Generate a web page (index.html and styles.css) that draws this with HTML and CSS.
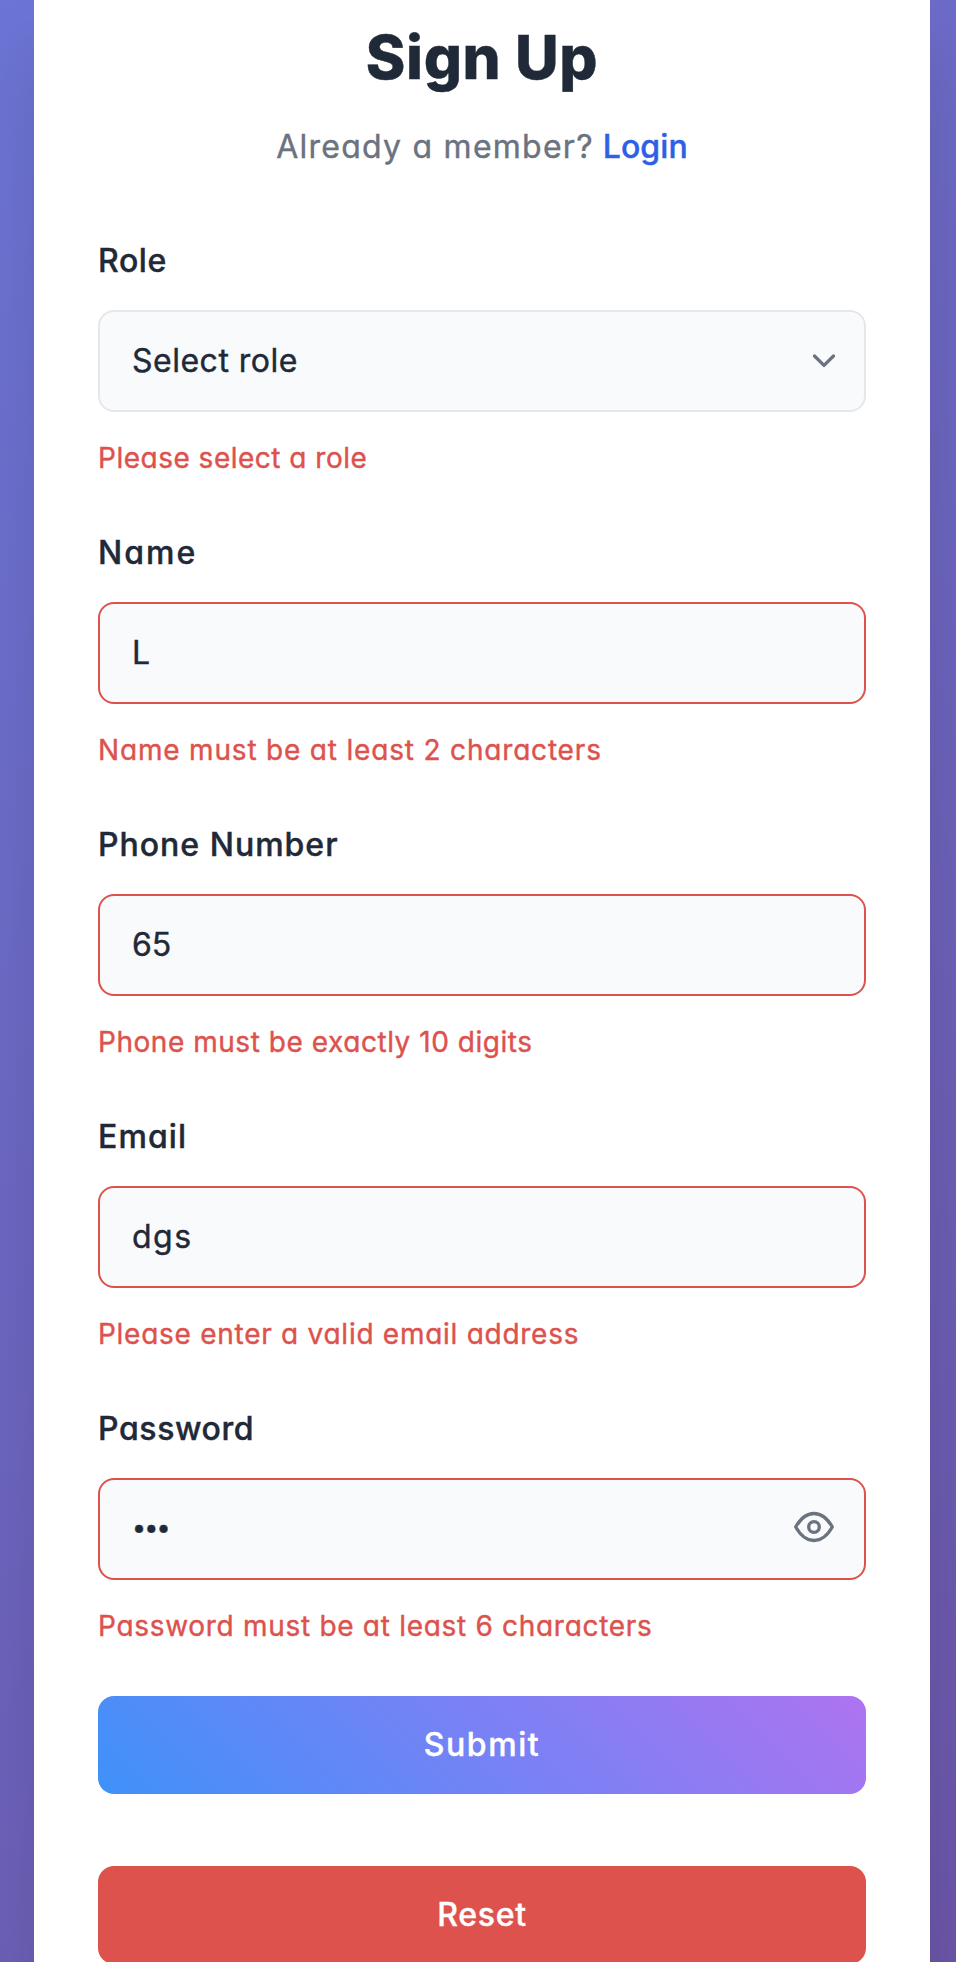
FILE: index.html
```html
<!DOCTYPE html>
<html lang="en">
<head>
<meta charset="utf-8">
<title>Sign Up</title>
<link rel="stylesheet" href="styles.css">
</head>
<body>
<main class="card">
  <h1 class="title">Sign Up</h1>
  <p class="subtitle"><span class="prompt">Already a member?</span> <a class="login" href="#">Login</a></p>
  <form class="form">
    <div class="field">
      <label class="label l-role">Role</label>
      <div class="control"><span class="v-role">Select role</span>
        <svg class="chevron" viewBox="0 0 24 16" width="24" height="16"><path d="M2.500 4 12 13.400 21.500 4"/></svg>
      </div>
      <p class="error e-role">Please select a role</p>
    </div>
    <div class="field">
      <label class="label l-name">Name</label>
      <div class="control invalid"><span>L</span></div>
      <p class="error e-name">Name must be at least 2 characters</p>
    </div>
    <div class="field">
      <label class="label l-phone">Phone Number</label>
      <div class="control invalid"><span>65</span></div>
      <p class="error e-phone">Phone must be exactly 10 digits</p>
    </div>
    <div class="field">
      <label class="label l-email">Email</label>
      <div class="control invalid"><span class="v-email">dgs</span></div>
      <p class="error e-email">Please enter a valid email address</p>
    </div>
    <div class="field">
      <label class="label l-pass">Password</label>
      <div class="control invalid"><span class="dots">•••</span>
        <svg class="eye" viewBox="0 0 42 32" width="42" height="32"><path d="M2.700 16C7 8.500 13.500 2.500 21 2.500S35 8.500 39.300 16C35 23.500 28.500 29.500 21 29.500S7 23.500 2.700 16Z"/><circle cx="21" cy="16" r="5.300"/></svg>
      </div>
      <p class="error e-pass">Password must be at least 6 characters</p>
    </div>
    <button type="button" class="button submit">Submit</button>
    <button type="button" class="button reset">Reset</button>
  </form>
</main>
</body>
</html>
```
FILE: styles.css
```css
* { box-sizing: border-box; }
html { height: 100%; overflow: hidden; }
body {
  margin: 0;
  height: 1962px;
  overflow: hidden;
  padding: 0 26px 0 34px;
  font-family: Inter, "Open Sans", sans-serif;
  font-feature-settings: "cv11" 1;
  -webkit-text-stroke: 0.4px currentColor;
  color: #1f2937;
  background: linear-gradient(135deg, #6c75d6 0%, #6c56a9 100%);
}
.card {
  height: 2060px;
  padding: 17px 64px 0;
  background: #fff;
  box-shadow: 0 50px 70px rgba(0, 0, 0, 0.12);
}
.title {
  margin: 0;
  text-align: center;
  font-size: 60px;
  line-height: 80px;
  font-weight: 800;
  letter-spacing: 0.6px;
}
.subtitle {
  margin: 25px 0 0;
  height: 50px;
  line-height: 50px;
  text-align: center;
  font-size: 32px;
  color: #6b7280;
  white-space: nowrap;
}
.prompt { letter-spacing: 1.25px; }
.login {
  color: #2f5fe8;
  font-weight: 500;
  letter-spacing: 0.1px;
  text-decoration: none;
}
.form { margin-top: 64px; display: flex; flex-direction: column; }
.field { height: 292px; }
.label {
  display: block;
  height: 50px;
  line-height: 50px;
  font-size: 32px;
  font-weight: 500;
}
.l-role { letter-spacing: 0.6px; }
.l-name { letter-spacing: 2px; }
.l-phone { letter-spacing: 1px; }
.l-email { letter-spacing: 1.1px; }
.l-pass { letter-spacing: 0.6px; }
.control {
  margin-top: 24px;
  height: 102px;
  padding: 0 28px 2px 32px;
  display: flex;
  align-items: center;
  justify-content: space-between;
  border: 2px solid #e5e7eb;
  border-radius: 16px;
  background: #f9fafc;
  font-size: 32px;
}
.invalid { border-color: #dd524d; }
.v-role { letter-spacing: 0.5px; }
.v-email { letter-spacing: 1.5px; }
.dots { font-size: 25px; letter-spacing: -1.8px; padding-bottom: 2px; }
.error {
  margin: 24px 0 0;
  height: 44px;
  line-height: 44px;
  font-size: 28px;
  color: #dd524d;
  white-space: nowrap;
}
.e-role { letter-spacing: 0.5px; }
.e-name { letter-spacing: 0.82px; }
.e-phone { letter-spacing: 0.54px; }
.e-email { letter-spacing: 0.73px; }
.e-pass { letter-spacing: 0.7px; }
.chevron, .eye {
  fill: none;
  stroke: #6b7280;
  stroke-width: 3.3;
  stroke-linecap: round;
  stroke-linejoin: round;
}
.eye { margin: 0 1px 2px 0; }
.button {
  height: 98px;
  padding: 0 0 2px;
  border: 0;
  border-radius: 16px;
  font: inherit;
  font-size: 32px;
  font-weight: 500;
  color: #fff;
}
.submit {
  letter-spacing: 1.6px;
  background: linear-gradient(45deg, #3f91fa, #ae73f0);
}
.reset { margin-top: 72px; letter-spacing: 0.7px; background: #dd524d; }
```
